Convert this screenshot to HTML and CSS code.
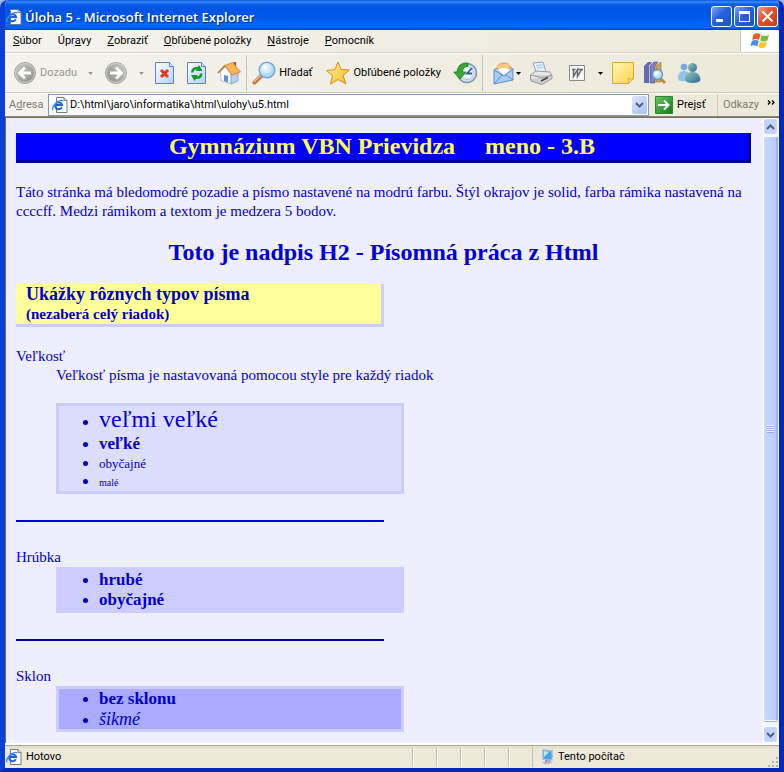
FILE: index.html
```html
<!DOCTYPE html>
<html lang="sk">
<head>
<meta charset="utf-8">
<title>Úloha 5 - Microsoft Internet Explorer</title>
<link rel="stylesheet" href="styles.css">
</head>
<body>
<svg class="defs" aria-hidden="true">
  <defs>
    <linearGradient id="grey" x1="0" y1="0" x2="1" y2="1"><stop offset="0" stop-color="#c9c9c5"/><stop offset="1" stop-color="#8c8c8a"/></linearGradient>
    <linearGradient id="paper" x1="0" y1="0" x2="1" y2="1"><stop offset="0" stop-color="#fff"/><stop offset="1" stop-color="#b4d0fa"/></linearGradient>
    <linearGradient id="gold" x1="0" y1="0" x2="1" y2="1"><stop offset="0" stop-color="#fff6a0"/><stop offset="1" stop-color="#f7b71c"/></linearGradient>
    <linearGradient id="note" x1="0" y1="0" x2="1" y2="1"><stop offset="0" stop-color="#fff8b8"/><stop offset="1" stop-color="#fbd24a"/></linearGradient>
    <linearGradient id="green" x1="0" y1="0" x2="1" y2="1"><stop offset="0" stop-color="#6cc860"/><stop offset="1" stop-color="#0b7a1c"/></linearGradient>
    <linearGradient id="teal" x1="0" y1="0" x2="1" y2="1"><stop offset="0" stop-color="#8fc7b4"/><stop offset="1" stop-color="#2d6c9c"/></linearGradient>
    <radialGradient id="glass" cx=".4" cy=".35"><stop offset="0" stop-color="#fff"/><stop offset="1" stop-color="#a9dcf4"/></radialGradient>
    <symbol id="ie" viewBox="0 0 16 16">
      <path d="M4.500 .5h7.500l3 3v12h-10.500z" fill="#fff" stroke="#777a80"/><path d="M12 .5v3h3" fill="#ddd" stroke="#777a80"/>
      <path d="M9.800 10.300a3.500 3.500 0 1 1 .3-2.300H3.800" fill="none" stroke="#1c62d8" stroke-width="2"/>
      <path d="M1.200 13C-1.500 10 7 1.500 11.500 4" fill="none" stroke="#3b8cec" stroke-width="1.300"/>
    </symbol>
    <symbol id="down" viewBox="0 0 5 3"><path d="M0 0h5L2.500 3z" fill="currentColor"/></symbol>
    <symbol id="arrow" viewBox="0 0 24 24">
      <circle cx="12" cy="12" r="10.500" fill="url(#grey)" stroke="#a3a3a0"/><circle cx="12" cy="12" r="9.500" fill="none" stroke="#d8d8d4" stroke-width=".8"/>
      <path d="M18 12H7M12 6.500L6.500 12l5.500 5.500" fill="none" stroke="#fff" stroke-width="2.800"/>
    </symbol>
  </defs>
</svg>

<div class="window">
  <header class="titlebar">
    <svg class="i16"><use href="#ie"/></svg>
    <span class="caption">Úloha 5 - Microsoft Internet Explorer</span>
    <button class="ctl" aria-label="Minimalizovať"><svg viewBox="0 0 21 21"><path d="M5 13h7v3H5z" fill="#fff"/></svg></button>
    <button class="ctl" aria-label="Maximalizovať"><svg viewBox="0 0 21 21"><path d="M5 5h11v11H5zM6 8v7h9V8z" fill="#fff" fill-rule="evenodd"/></svg></button>
    <button class="ctl close" aria-label="Zavrieť"><svg viewBox="0 0 21 21"><path d="M5.500 5.500l10 10M15.500 5.500l-10 10" stroke="#fff" stroke-width="2.200"/></svg></button>
  </header>

  <div class="chrome">
    <nav class="menubar">
      <button><u>S</u>úbor</button>
      <button>Úpr<u>a</u>vy</button>
      <button><u>Z</u>obraziť</button>
      <button><u>O</u>bľúbené položky</button>
      <button><u>N</u>ástroje</button>
      <button><u>P</u>omocník</button>
      <span class="flag">
        <svg viewBox="0 0 20 18">
          <path d="M3.500 2.500q3.500-2.500 7 0L9 8Q5.500 6 2 8z" fill="#ee5a30"/>
          <path d="M11.500 3q3.500 2 7.500 0l-1.600 5.500q-3.500 2-7.300 0z" fill="#7cbb3c"/>
          <path d="M1.800 9q3.500-2 7 0l-1.500 5.500q-3.500-2.300-7 0z" fill="#4d8be8"/>
          <path d="M9.800 9.600q3.500 2 7.300 0l-1.600 5.500q-3.700 2.200-7.200 0z" fill="#fbc62f"/>
        </svg>
      </span>
    </nav>

    <div class="toolbar">
      <button class="tool off"><svg class="i24"><use href="#arrow"/></svg>Dozadu<svg class="down wide"><use href="#down"/></svg></button>
      <button class="tool off next" aria-label="Dopredu"><svg class="i24 flip"><use href="#arrow"/></svg><svg class="down wide"><use href="#down"/></svg></button>
      <button class="tool" aria-label="Zastaviť"><svg class="i24" viewBox="0 0 24 24"><path d="M2.500 1.500h14l4 4v17h-18z" fill="url(#paper)" stroke="#5c84c8"/><path d="M16.500 1.500v4h4" fill="#dce8fc" stroke="#5c84c8"/><path d="M8 9l7 7M15 9l-7 7" stroke="#ee3418" stroke-width="3"/></svg></button>
      <button class="tool" aria-label="Obnoviť"><svg class="i24" viewBox="0 0 24 24"><path d="M2.500 1.500h14l4 4v17h-18z" fill="url(#paper)" stroke="#5c84c8"/><path d="M16.500 1.500v4h4" fill="#dce8fc" stroke="#5c84c8"/><path d="M6 11.500q.5-6 6.500-5.500l1.500-2 3.500 6h-7l1.500-1.500q-3-.5-3.500 3zM17.500 12.500q-.5 6-6.500 5.500l-1.500 2-3.500-6h7l-1.500 1.500q3 .5 3.500-3z" fill="#149a28"/></svg></button>
      <button class="tool" aria-label="Domov"><svg class="i24" viewBox="0 0 24 24"><path d="M16.500 1h2.500v6h-2.500z" fill="#b5482c"/><path d="M3.500 11L8 6l6 7v10L4 19.500z" fill="#fafcff" stroke="#9ab0d4" stroke-width=".7"/><path d="M14 13l7-1v8l-7 3z" fill="#b7cdf4" stroke="#7d96c4" stroke-width=".7"/><path d="M7 14l4 1v6.500l-4-1.500z" fill="#658cd0"/><path d="M8 4.500L15.500 1.500 23.500 11l-8.500 3z" fill="#f7b757" stroke="#cf7a28" stroke-width=".8"/><path d="M8 4.500L1 12" stroke="#ce7430" stroke-width="1.800"/></svg></button>
      <span class="sep"></span>
      <button class="tool"><svg class="i24" viewBox="0 0 24 24"><path d="M9.500 14.500L2.500 21.500" stroke="#b87848" stroke-width="4" stroke-linecap="round"/><path d="M9 14L2 21" stroke="#edc095" stroke-width="1.500"/><circle cx="15" cy="9" r="7.800" fill="url(#glass)" stroke="#7ba6d0" stroke-width="1.500"/></svg>Hľadať</button>
      <button class="tool fav"><svg class="i24" viewBox="0 0 24 24"><path d="M12 1l3 7.500 8.500.5-6.500 5.500 3 8.500-8-4.500L4.500 23l2-8.500L.5 9.500 9 8.500z" fill="url(#gold)" stroke="#d99018" stroke-linejoin="round"/></svg>Obľúbené položky</button>
      <button class="tool hist" aria-label="História"><svg class="i24" viewBox="0 0 24 24"><circle cx="14" cy="12" r="9.500" fill="#cfe3f5" stroke="#7f93ac" stroke-width="1.500"/><circle cx="14" cy="12" r="6.500" fill="#eef6fd" stroke="#a8bfd8"/><path d="M19 7l-5 5.500h5" fill="none" stroke="#345a90" stroke-width="1.800"/><path d="M15 2Q5 1 4 11H.8L7 18l6-7H9.500q0-5 5.500-6z" fill="#37aa34" stroke="#16781c" stroke-width=".8"/></svg></button>
      <span class="sep"></span>
      <button class="tool mail" aria-label="Pošta"><svg class="i24" viewBox="0 0 24 24"><path d="M2 9l10-7 9 6v11L2 23z" fill="#a7cbf4" stroke="#6290cc"/><path d="M5 8q0-6 7-6t6 6l-6 6z" fill="#fbc880" stroke="#de9c50" stroke-width=".7"/><path d="M6 9q5-4 12 0l-6 5z" fill="#fff"/><path d="M2 9l10 6 9-7M2 23l8-9M21 19l-7-5" fill="none" stroke="#6290cc"/></svg><svg class="down"><use href="#down"/></svg></button>
      <button class="tool" aria-label="Tlačiť"><svg class="i24" viewBox="0 0 24 24"><path d="M4 2l10-1 3 10-9 2z" fill="#e7f1ff" stroke="#84a5d8"/><path d="M7 4.500l6-.6M8 7l6-.6" stroke="#a6c2ea"/><path d="M1.500 14L7 10l14 1 2 4-9 5.500L1.500 18z" fill="#e8e8e6" stroke="#9a9a9a"/><path d="M1.500 14l12 3 9.500-3M2 18v2l11 3.500 10-6V15" fill="#cecece" stroke="#9a9a9a"/><path d="M12 20l7-3.500" stroke="#444" stroke-width="1.500"/></svg></button>
      <button class="tool word" aria-label="Upraviť"><svg class="i24" viewBox="0 0 24 24"><path d="M4.500 4.500h15v15h-15z" fill="#f6f6f4" stroke="#8a8a88"/><path d="M7 8.500h3.500M12 8.500h6M8.500 8.500v7l4-7v7l4-7" fill="none" stroke="#666" stroke-width="1.500"/></svg><svg class="down"><use href="#down"/></svg></button>
      <button class="tool" aria-label="Diskusia"><svg class="i24" viewBox="0 0 24 24"><path d="M1.500 1.500h21v16l-5 5h-16z" fill="url(#note)" stroke="#dba82c"/><path d="M17.500 22.500q1-3-.5-5 3 1.500 5.500 0z" fill="#fff3a6" stroke="#dba82c"/></svg></button>
      <button class="tool" aria-label="Zdroje informácií"><svg class="i24" viewBox="0 0 24 24"><path d="M1 5l4-4h4L6 5v17H1z" fill="#6668b0"/><path d="M7 5l4-4h4l-3 4v17H7z" fill="#8080c4" stroke="#4b4c94" stroke-width=".6"/><path d="M13 5l5-4v20h-5z" fill="#c8a858" stroke="#927635" stroke-width=".6"/><path d="M17 17l5 5" stroke="#c48a4c" stroke-width="3"/><circle cx="14.500" cy="13.500" r="5" fill="url(#glass)" stroke="#6c94bc" stroke-width="1.300"/></svg></button>
      <button class="tool msn" aria-label="Messenger"><svg class="i24" viewBox="0 0 24 24"><circle cx="7" cy="6" r="3.300" fill="#76a9dc"/><path d="M1 18q0-8 6-8t6 6l-5 4q-6 1-7-2z" fill="#92c3e6"/><circle cx="15.500" cy="6.500" r="4.500" fill="url(#teal)"/><path d="M8 19q0-8 7.500-8t8 8q-1 3-8 3t-7.500-3z" fill="url(#teal)"/></svg></button>
    </div>

    <div class="address">
      <label for="url">A<u>d</u>resa</label>
      <div class="field">
        <svg class="i16"><use href="#ie"/></svg>
        <input id="url" type="text" value="D:\html\jaro\informatika\html\ulohy\u5.html">
        <button class="drop" aria-label="Zobraziť adresy"><svg viewBox="0 0 9 6"><path d="M1 1l3.500 3.500L8 1" fill="none" stroke="#4d6185" stroke-width="2"/></svg></button>
      </div>
      <button class="go"><svg viewBox="0 0 18 18"><path d="M.5.5h17v17H.5z" fill="url(#green)" stroke="#2d8a34"/><path d="M3 9h10M9 4.500L13.500 9 9 13.500" fill="none" stroke="#fff" stroke-width="2"/></svg>Prejsť</button>
      <span class="links">Odkazy</span>
      <button class="more" aria-label="Ďalšie"><svg viewBox="0 0 8 5"><path d="M1 .5l2 2-2 2M5 .5l2 2-2 2" fill="none" stroke="#000" stroke-width="1.300"/></svg></button>
    </div>
  </div>

  <div class="view">
    <main class="page">
      <h1>Gymnázium VBN Prievidza &nbsp;&nbsp;&nbsp; meno - 3.B</h1>
      <p>Táto stránka má bledomodré pozadie a písmo nastavené na modrú farbu. Štýl okrajov je solid, farba rámika nastavená na ccccff. Medzi rámikom a textom je medzera 5 bodov.</p>
      <h2>Toto je nadpis H2 - Písomná práca z Html</h2>
      <h3>Ukážky rôznych typov písma<small>(nezaberá celý riadok)</small></h3>
      <dl>
        <dt>Veľkosť</dt>
        <dd>Veľkosť písma je nastavovaná pomocou style pre každý riadok
          <ul class="sizes">
            <li class="huge">veľmi veľké</li>
            <li class="big">veľké</li>
            <li class="plain">obyčajné</li>
            <li class="tiny">malé</li>
          </ul>
        </dd>
      </dl>
      <hr>
      <dl>
        <dt>Hrúbka</dt>
        <dd>
          <ul class="weights">
            <li class="strong">hrubé</li>
            <li class="strong">obyčajné</li>
          </ul>
        </dd>
      </dl>
      <hr class="dark">
      <dl>
        <dt>Sklon</dt>
        <dd>
          <ul class="slants">
            <li class="strong">bez sklonu</li>
            <li class="slanted">šikmé</li>
          </ul>
        </dd>
      </dl>
    </main>
    <div class="scroll">
      <button aria-label="Nahor"><svg viewBox="0 0 9 6"><path d="M1 5l3.500-3.500L8 5" fill="none" stroke="#4d6185" stroke-width="2"/></svg></button>
      <div class="thumb"><span></span></div>
      <button aria-label="Nadol"><svg viewBox="0 0 9 6"><path d="M1 1l3.500 3.500L8 1" fill="none" stroke="#4d6185" stroke-width="2"/></svg></button>
    </div>
  </div>

  <footer class="status">
    <span class="state"><svg class="i16"><use href="#ie"/></svg>Hotovo</span>
    <span class="cell"></span><span class="cell"></span><span class="cell"></span><span class="cell"></span><span class="cell"></span>
    <span class="zone"><svg class="i16" viewBox="0 0 16 16"><path d="M4 1l9 1v9l-9-1z" fill="#3ba7ee" stroke="#a7b6cc" stroke-width="1.400"/><path d="M5 2l5 1-5 5z" fill="#b9ecff"/><path d="M6 11l5 .5v2H6z" fill="#8690a8"/><path d="M3 13l9-1 1 2-7 1.500z" fill="#b7b4d0"/></svg>Tento počítač</span>
    <svg class="grip" viewBox="0 0 12 12"><path d="M9 1h2v2H9zM5 5h2v2H5zM9 5h2v2H9zM1 9h2v2H1zM5 9h2v2H5zM9 9h2v2H9z" fill="#b8b4a0"/></svg>
  </footer>
</div>
</body>
</html>
```
FILE: styles.css
```css
* { box-sizing: border-box; }
body { margin: 0; background: #9fb4e8; font: 11px/14px Roboto, "Liberation Sans", sans-serif; color: #000; }
button { border: 0; padding: 0; margin: 0; background: none; font: inherit; color: inherit; display: flex; align-items: center; justify-content: center; }
svg { display: block; flex: none; }
.defs { position: absolute; width: 0; height: 0; }
.i16 { width: 16px; height: 16px; }
.i24 { width: 24px; height: 24px; }

.window { min-height: 100vh; display: flex; flex-direction: column; border: solid #0a3fd8; border-width: 0 5px 4px; border-color: #0a3fd8 #0428b8 #0428b8 #0a3fd8; border-radius: 8px 8px 0 0; background: #ece9d8; overflow: hidden; }

.titlebar { height: 30px; margin: 0 -5px; padding: 3px 6px 0; display: flex; align-items: center; gap: 2px; background: linear-gradient(#0a56dc 0, #3c8cf8 2px, #0860e8 4px, #0054e3 9px, #0058ea 17px, #0466ff 25px, #0060f8 28px, #0040c0 30px); color: #fff; }
.caption { flex: 1; margin-left: 1px; font: 600 13px/18px "Open Sans", "Noto Sans", sans-serif; text-shadow: 1px 1px 1px #0a2a7c; }
.ctl { width: 21px; height: 21px; border: 1px solid #fff; border-radius: 3px; background: linear-gradient(135deg, #7ba2f4, #2660e0 45%, #1c52d0); }
.ctl svg { width: 21px; height: 21px; }
.ctl.close { background: linear-gradient(135deg, #f0a088, #e0502c 45%, #c83c14); }

.menubar { height: 23px; display: flex; align-items: center; gap: 16px; padding-left: 8px; border-bottom: 1px solid #d4d0be; background: linear-gradient(90deg, #f4f3ee, #ece9d8); }
.flag { margin-left: auto; width: 39px; height: 22px; display: flex; align-items: center; justify-content: center; background: #fff; border-left: 1px solid #cac6b4; }
.flag svg { width: 20px; height: 18px; }

.toolbar { height: 40px; display: flex; align-items: center; gap: 8px; padding-left: 8px; border-top: 1px solid #fff; border-bottom: 1px solid #cdc9b6; background: linear-gradient(90deg, #f4f3ee, #ece9d8); }
.tool { gap: 3px; white-space: nowrap; flex: none; }
.off { color: #9a998f; }
.flip { transform: scaleX(-1); }
.down { width: 5px; height: 3px; }
.wide { margin: 0 1px 0 8px; }
.sep { width: 1px; height: 36px; background: #c8c5b2; margin: 0 -3px; }
.next, .msn { margin-left: 2px; }
.fav { margin-left: 6px; }
.hist, .mail, .word { margin-left: 4px; }
.mail { gap: 0; }
.word { gap: 9px; }

.address { height: 24px; display: flex; align-items: center; padding: 0 2px 0 4px; border-top: 1px solid #fff; border-bottom: 1px solid #8a8778; background: linear-gradient(90deg, #f4f3ee, #ece9d8); }
.address label { width: 39px; color: #7c7b74; }
.field { flex: 1; height: 22px; display: flex; align-items: center; padding: 1px 1px 1px 3px; background: #fff; border: 1px solid #7f9db9; }
.field input { flex: 1; min-width: 0; border: 0; padding: 0 2px; background: none; font: inherit; color: inherit; outline: 0; }
.drop { width: 15px; height: 18px; border-radius: 2px; background: linear-gradient(135deg, #dce6ff, #a8c0f4); }
.drop svg, .scroll svg { width: 9px; height: 6px; }
.go { width: 68px; padding-left: 6px; gap: 4px; justify-content: flex-start; }
.go svg { width: 18px; height: 18px; }
.links { width: 48px; padding-left: 5px; height: 22px; line-height: 22px; border-left: 1px solid #d0ccba; color: #7c7b74; }
.more { width: 12px; height: 18px; align-items: flex-start; padding-top: 4px; }
.more svg { width: 8px; height: 5px; }

.view { flex: 1; display: flex; border: solid #716f64; border-width: 1px 0 0 1px; background: #eeeeff; }
.page { flex: 1; padding: 15px 11px 11px 10px; color: #0000cc; font: 15px/19px "Liberation Serif", serif; }
h1, h2 { font-size: 24px; text-align: center; margin: 0; }
h1 { padding: 0 0 1px; line-height: 26px; background: #0000ff; color: #ffff44; border: solid #000099; border-width: 0 3px 3px 0; }
.page p { margin: 20px 0 18px; }
h2 { line-height: 27px; color: #0000dd; }
h3 { width: 50%; margin: 18px 0 20px; padding-left: 10px; background: #ffff99; border: solid #ccccff; border-width: 0 3px 3px 0; font-size: 18px; line-height: 21px; }
h3 small { display: block; font-size: 15px; line-height: 19px; }
dl { margin: 0; }
dd { margin: 0 0 0 40px; }
.page ul { width: 50%; margin: 0; padding: 0 0 0 40px; border: 3px solid #ccccff; line-height: 20px; }
.page ul.sizes { margin: 18px 0 26px; background: #ddddff; }
.weights { background: #ccccff; }
.slants { background: #aaaaff; }
li::marker { font-size: 16px; }
.strong { font-size: 17px; font-weight: bold; }
.slanted { font-size: 18px; font-style: italic; }
.huge { font-size: 24px; line-height: 27px; }
.big { font-size: 17px; line-height: 21px; font-weight: bold; }
.plain { font-size: 13px; line-height: 18px; }
.tiny { font-size: 10px; line-height: 16px; }
hr { width: 50%; height: 2px; margin: 26px 0; border: 0; background: #0000dd; }
hr.dark { background: #000099; }

.scroll { width: 17px; display: flex; flex-direction: column; gap: 1px; padding: 0 1px; background: #f4f4fc; }
.scroll button { height: 17px; border: 1px solid #fff; border-radius: 3px; background: #c4d4fc; }
.thumb { flex: 1; display: flex; align-items: center; justify-content: center; border: 1px solid #fff; border-right: 2px solid #9fb6ec; border-radius: 2px; background: linear-gradient(90deg, #c8d8ff, #b8ccf8); margin-bottom: 4px; box-shadow: 0 1px 0 #9cb4e8; }
.thumb span { width: 7px; height: 8px; background: repeating-linear-gradient(#f4f8ff 0 1px, #8caae8 1px 2px); }

.status { height: 25px; display: flex; align-items: center; border-top: 2px solid #fff; box-shadow: inset 0 1px 0 #aca899; background: linear-gradient(#dedac8, #ece9d8 5px); }
.state { flex: 1; display: flex; align-items: center; gap: 4px; padding-left: 1px; }
.cell { width: 24px; height: 20px; border-left: 1px solid #c4c0ae; box-shadow: inset 1px 0 0 #fff; }
.zone { width: 235px; display: flex; align-items: center; gap: 3px; padding-left: 6px; height: 20px; border-left: 1px solid #c4c0ae; }
.grip { width: 12px; height: 12px; align-self: flex-end; }
```
